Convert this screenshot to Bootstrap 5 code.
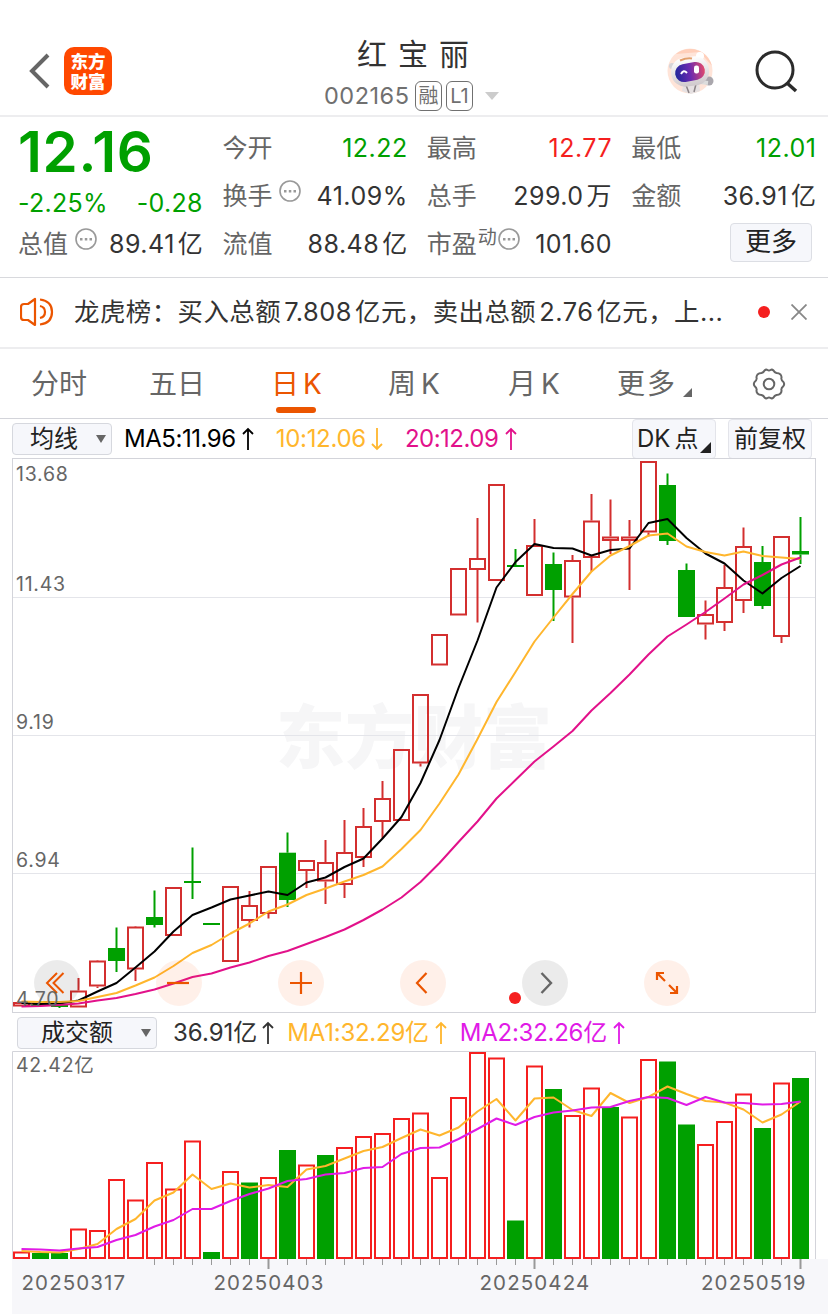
<!DOCTYPE html>
<html lang="zh-CN">
<head>
<meta charset="utf-8">
<meta name="viewport" content="width=device-width, initial-scale=1">
<title>红宝丽 002165</title>
<link href="https://cdn.jsdelivr.net/npm/bootstrap@5.3.0/dist/css/bootstrap.min.css" rel="stylesheet">
<style>
  body { font-family: Inter, "Noto Sans CJK SC", sans-serif; color: #333; background: #fff; font-size: 25px; line-height: 1; overflow: hidden; }
  .phone { width: 828px; height: 1314px; }
  .phone > * { flex: none; }
  .txt-dim { color: #666; }
  .up { color: #f51f1f; }
  .down { color: #00a000; }
  .ma10 { color: #ffb62d; }
  .ma20 { color: #e2118a; }
  .vma2 { color: #e01be6; }
  svg { display: block; flex: none; }

  .topbar { height: 117px; border-bottom: 2px solid #ededef; padding: 0 29px 0 29px; }
  .topbar .side { width: 220px; padding-top: 26px; }
  .brand-logo { width: 48px; height: 48px; border-radius: 10px; background: #ff4800; color: #fff; font: 900 17.5px/20px "Noto Sans CJK SC", sans-serif; padding-top: 4px; margin-left: 14px; text-align: center; }
  .stock-name { font-size: 30px; letter-spacing: 11px; margin-right: -9px; line-height: 36px; padding-top: 36px; }
  .stock-code { font-size: 23.5px; height: 30px; margin-top: 9px; margin-right: 5px; color: #707070; }
  .stock-code .num { letter-spacing: .5px; }
  .tagbox { border: 1.5px solid #707070; border-radius: 6px; height: 30px; width: 27px; font-size: 20px; margin-left: 4px; }
  .tagbox.first { margin-left: 6px; }

  .quote { height: 161px; border-bottom: 1px solid #d8d9dd; padding: 7px 12px 0 18px; column-gap: 19.5px; }
  .quote > div { width: 185px; }
  .stat { height: 48px; white-space: nowrap; }
  .num { letter-spacing: .5px; margin-right: -.5px; }
  .num i { font-style: normal; margin-left: 3px; }
  .price { height: 56px; font-size: 56.5px; font-weight: 600; letter-spacing: .7px; }
  .chg { height: 34px; margin-top: 6px; letter-spacing: .3px; }
  .dots { margin: -10px 0 0 7px; }
  .more-btn { width: 82px; height: 39px; margin: -4px 4px 0 0; border: 1.5px solid #dcdee4; border-radius: 4px; background: #f6f7fb; color: #222; padding: 0; font-size: 26px; line-height: 1; }

  .notice { height: 71px; border-bottom: 2px solid #ededef; padding: 0 20px 2px; }
  .notice-text { font-size: 25.4px; letter-spacing: .5px; white-space: nowrap; margin-left: 20px; width: 665px; }
  .notice-text i { font-style: normal; margin: 0 3px; }
  .dot { width: 12px; height: 12px; border-radius: 50%; background: #f51f1f; }

  .tabs { height: 70px; border-bottom: 1px solid #d3d4da; font-size: 28px; color: #666; }
  .tabs > div { white-space: nowrap; height: 69px; }
  .tab-on { color: #eb5500; position: relative; }
  .tab-on::after { content: ""; position: absolute; left: 5px; bottom: 5px; width: 40px; height: 6px; border-radius: 3px; background: #eb5500; }

  .ma-row { height: 39px; padding: 0 16px 0 12px; font-size: 24px; white-space: nowrap; }
  .picker { background: #f6f7fb; border: 1.5px solid #d6d8de; border-radius: 4px; color: #222; height: 32px; }
  .flat { height: 40px; border-color: #e3e4ea; }
  .chart { margin: 0 12px; position: relative; }
  .axis-label { position: absolute; left: 4px; font-size: 19.5px; color: #666; letter-spacing: .75px; }
  .mark-text { position: absolute; left: 264px; top: 239px; font: 900 69px/72px "Noto Sans CJK SC", sans-serif; color: #f6f6f7; }
  .chart svg.plot { position: relative; }
  .tools { position: absolute; left: 22px; bottom: 7px; gap: 76px; }
  .tool { width: 46px; height: 46px; border-radius: 50%; background: rgba(255,84,0,.085); }
  .tool.grey { background: rgba(0,0,0,.08); }
  .vol-row { height: 38px; padding: 4px 17px 0; font-size: 24px; white-space: nowrap; }
  .vol-row span { letter-spacing: -.25px; }
  .date-axis { height: 55px; margin-left: 12px; background: #f7f7fa; font-size: 20.5px; color: #666; letter-spacing: 1.1px; position: relative; }
  .date-axis span { position: absolute; top: 14px; }
</style>
</head>
<body>
<div class="phone d-flex flex-column">
  <header class="topbar d-flex justify-content-between">
    <div class="side d-flex align-items-center">
      <svg width="21" height="36" viewBox="0 0 21 36" fill="none" stroke="#666" stroke-width="4"><path d="M19 2 3 18 19 34"/></svg>
      <div class="brand-logo">东方<br>财富</div>
    </div>
    <div class="d-flex flex-column align-items-center">
      <div class="stock-name">红宝丽</div>
      <div class="stock-code d-flex align-items-center">
        <span class="num">002165</span>
        <span class="tagbox first d-flex align-items-center justify-content-center">融</span>
        <span class="tagbox d-flex align-items-center justify-content-center">L1</span>
        <svg width="14" height="8" viewBox="0 0 14 8" style="margin-left:12px"><path d="M0 0h14L7 8z" fill="#ccc"/></svg>
      </div>
    </div>
    <div class="side d-flex align-items-center justify-content-end">
      <svg width="48" height="48" viewBox="0 0 48 48">
        <defs>
          <linearGradient id="visor" x1="0" y1="0" x2="1" y2="0"><stop offset="0" stop-color="#20279c"/><stop offset=".5" stop-color="#6b2ab0"/><stop offset="1" stop-color="#e34a6c"/></linearGradient>
          <linearGradient id="shell" x1="0" y1="0" x2="0" y2="1"><stop offset="0" stop-color="#fff"/><stop offset="1" stop-color="#cfc9cc"/></linearGradient>
        </defs>
        <circle cx="24" cy="24" r="22.500" fill="#ffe4d8"/>
        <path d="M10 7a22.500 22.500 0 0 1 36 12L34 5z" fill="#ffcfba"/>
        <path d="M18 34h15l1 10-9 3-9-3z" fill="#e6e1e2"/><path d="M20 38l3 8M30 37l-2 8" stroke="#8b8487" stroke-width="1.500"/>
        <circle cx="6" cy="19" r="3" fill="#d6d4d8"/><circle cx="43" cy="34" r="4.500" fill="#aaa7ad"/><path d="M34 35l8 1" stroke="#ddd" stroke-width="4"/>
        <circle cx="34" cy="9" r="4" fill="#fff"/>
        <rect x="5" y="10" width="38" height="29" rx="14" fill="url(#shell)" transform="rotate(-8 24 24)"/>
        <path d="M14 13.500q7-3 12-2" stroke="#e3a06e" stroke-width="2.200" fill="none"/>
        <rect x="9" y="16" width="30" height="18" rx="9" fill="url(#visor)" transform="rotate(-10 24 25)"/>
        <path d="M15 27q2.500-5 6-1" stroke="#fff" stroke-width="2" fill="none"/><rect x="28" y="18.500" width="5" height="8" rx="2.200" fill="#fff"/>
      </svg>
      <svg style="margin-left:38px;margin-right:1px" width="46" height="46" viewBox="0 0 46 46" fill="none" stroke="#2b2b2b" stroke-width="3"><circle cx="23" cy="22" r="18"/><path d="M35 35l9 8" stroke-width="3.500"/></svg>
    </div>
  </header>

  <section class="quote d-flex">
    <div>
      <div class="price down d-flex align-items-center"><span>12.16</span></div>
      <div class="chg down d-flex align-items-center justify-content-between"><span>-2.25%</span><span>-0.28</span></div>
      <div class="stat d-flex align-items-center"><span class="txt-dim">总值</span><svg class="dots" width="22" height="22" viewBox="0 0 22 22"><circle cx="11" cy="11" r="10" fill="none" stroke="#999" stroke-width="1.600"/><path d="M5 10h2.500v2.500H5zM9.800 10h2.500v2.500H9.800zM14.500 10H17v2.500h-2.500z" fill="#999"/></svg><span class="num ms-auto">89.41<i>亿</i></span></div>
    </div>
    <div>
      <div class="stat d-flex align-items-center justify-content-between"><span class="txt-dim">今开</span><span class="num down">12.22</span></div>
      <div class="stat d-flex align-items-center"><span class="txt-dim">换手</span><svg class="dots" width="22" height="22" viewBox="0 0 22 22"><circle cx="11" cy="11" r="10" fill="none" stroke="#999" stroke-width="1.600"/><path d="M5 10h2.500v2.500H5zM9.800 10h2.500v2.500H9.800zM14.500 10H17v2.500h-2.500z" fill="#999"/></svg><span class="num ms-auto">41.09%</span></div>
      <div class="stat d-flex align-items-center justify-content-between"><span class="txt-dim">流值</span><span class="num">88.48<i>亿</i></span></div>
    </div>
    <div>
      <div class="stat d-flex align-items-center justify-content-between"><span class="txt-dim">最高</span><span class="num up">12.77</span></div>
      <div class="stat d-flex align-items-center justify-content-between"><span class="txt-dim">总手</span><span class="num">299.0<i>万</i></span></div>
      <div class="stat d-flex align-items-center"><span class="txt-dim">市盈</span><span class="txt-dim" style="font-size:19px;margin:-14px 0 0 1px">动</span><svg class="dots" style="margin-left:1px" width="22" height="22" viewBox="0 0 22 22"><circle cx="11" cy="11" r="10" fill="none" stroke="#999" stroke-width="1.600"/><path d="M5 10h2.500v2.500H5zM9.800 10h2.500v2.500H9.800zM14.500 10H17v2.500h-2.500z" fill="#999"/></svg><span class="num ms-auto">101.60</span></div>
    </div>
    <div>
      <div class="stat d-flex align-items-center justify-content-between"><span class="txt-dim">最低</span><span class="num down">12.01</span></div>
      <div class="stat d-flex align-items-center justify-content-between"><span class="txt-dim">金额</span><span class="num">36.91<i>亿</i></span></div>
      <div class="stat d-flex align-items-center justify-content-end"><button class="btn more-btn">更多</button></div>
    </div>
  </section>

  <section class="notice d-flex align-items-center">
    <svg width="34" height="30" viewBox="0 0 34 30" fill="none" stroke="#eb5500" stroke-width="2.200"><path d="M15 2v26L8 23H4q-3 0-3-3V10q0-3 3-3h4z" stroke-linejoin="round"/><path d="M20 9q5 1 5 6t-5 6M20 2.500Q32 4 32 15T20 27.500"/></svg>
    <div class="notice-text">龙虎榜：买入总额<i>7.808</i>亿元，卖出总额<i>2.76</i>亿元，上...</div>
    <span class="dot" style="margin-left:19px"></span>
    <svg style="margin-left:21px" width="16" height="16" viewBox="0 0 16 16" stroke="#888" stroke-width="1.800"><path d="M.5.5l15 15M15.500.5l-15 15"/></svg>
  </section>

  <nav class="tabs d-flex align-items-center">
    <div class="d-flex align-items-center" style="margin-left:31px;width:118px">分时</div>
    <div class="d-flex align-items-center" style="width:122px">五日</div>
    <div class="d-flex align-items-center tab-on" style="width:117px">日<span style="margin-left:4px">K</span></div>
    <div class="d-flex align-items-center" style="width:120px">周<span style="margin-left:5px">K</span></div>
    <div class="d-flex align-items-center" style="width:109px">月<span style="margin-left:5px">K</span></div>
    <div class="d-flex align-items-center" style="width:135px"><span style="letter-spacing:2px">更多</span><svg style="margin:18px 0 0 6px" width="9" height="9"><path d="M9 0v9H0z" fill="#666"/></svg></div>
    <div class="d-flex align-items-center"><svg width="34" height="32" viewBox="0 0 34 32" fill="none" stroke="#666" stroke-width="2"><path d="M12.500 2.500Q14 1 15.500 2q1.500 1 3 0Q20 1 21.500 2.500q1 2 3 2.500 2.500 0 4 1.500 1.500 2 .8 4 .2 2 2 3.300Q33 16 31.300 18.200q-1.800 1.500-2 3.300.7 2-.8 4-1.500 1.500-4 1.500-2 .5-3 2.500-1.500 1.500-3 .5-1.500-1-3 0-1.500 1-3-.5-1-2-3-2.500-2.500 0-4-1.500-1.500-2-.8-4-.2-1.800-2-3.300Q1 16 2.700 13.800q1.800-1.300 2-3.300-.7-2 .8-4Q7 5 9.500 5q2-.5 3-2.500z"/><circle cx="17" cy="16" r="5.300"/></svg></div>
  </nav>

  <div class="ma-row d-flex align-items-center">
    <div class="picker d-flex align-items-center" style="width:100px;padding-left:17px">均线<svg style="margin-left:18px" width="10" height="8"><path d="M0 0h10L5 8z" fill="#666"/></svg></div>
    <span class="text-black" style="margin-left:12px;letter-spacing:-.45px">MA5:11.96</span><svg style="margin-left:6px" width="12" height="24" viewBox="0 0 12 24" fill="none" stroke="#000" stroke-width="1.800"><path d="M6 23V2M1 7l5-5 5 5"/></svg>
    <span class="ma10" style="margin-left:22px;letter-spacing:-.3px">10:12.06</span><svg style="margin-left:5px" width="12" height="24" viewBox="0 0 12 24" fill="none" stroke="#ffb62d" stroke-width="1.800"><path d="M6 1v21M1 17l5 5 5-5"/></svg>
    <span class="ma20" style="margin-left:22px;letter-spacing:-.5px">20:12.09</span><svg style="margin-left:7px" width="12" height="24" viewBox="0 0 12 24" fill="none" stroke="#e2118a" stroke-width="1.800"><path d="M6 23V2M1 7l5-5 5 5"/></svg>
    <div class="picker flat d-flex align-items-center ms-auto" style="width:84px;padding-left:4px">DK<span style="margin-left:4px">点</span><svg style="margin:18px 0 0 2px" width="11" height="11"><path d="M11 0v11H0z" fill="#222"/></svg></div>
    <div class="picker flat d-flex align-items-center justify-content-center" style="width:84px;margin-left:12px">前复权</div>
  </div>

  <div class="chart" style="height:555px">
    <div class="mark-text">东方财富</div>
    <svg class="plot" id="kline" width="804" height="555" viewBox="12 458 804 555"></svg>
    <span class="axis-label" style="top:7px">13.68</span>
    <span class="axis-label" style="top:117px">11.43</span>
    <span class="axis-label" style="top:255px">9.19</span>
    <span class="axis-label" style="top:393px">6.94</span>
    <div class="tools d-flex">
      <div class="tool grey d-flex align-items-center justify-content-center"><svg style="margin-right:5px" width="20" height="22" viewBox="0 0 20 22" fill="none" stroke="#eb5500" stroke-width="2"><path d="M12 1 2 11l10 10M18.500 1l-10 10 10 10"/></svg></div>
      <div class="tool d-flex align-items-center justify-content-center"><svg style="margin-right:3px" width="22" height="22" stroke="#eb5500" stroke-width="2.200"><path d="M0 11h22"/></svg></div>
      <div class="tool d-flex align-items-center justify-content-center"><svg width="22" height="22" stroke="#eb5500" stroke-width="2.200"><path d="M0 11h22M11 0v22"/></svg></div>
      <div class="tool d-flex align-items-center justify-content-center"><svg style="margin-right:3px" width="13" height="22" fill="none" stroke="#eb5500" stroke-width="2.200"><path d="M11.500 1 2 11l9.500 10"/></svg></div>
      <div class="tool grey d-flex align-items-center justify-content-center"><svg style="margin-left:2px" width="13" height="22" fill="none" stroke="#666" stroke-width="2.400"><path d="M1.500 1 11 11 1.500 21"/></svg></div>
      <div class="tool d-flex align-items-center justify-content-center"><svg width="24" height="24" fill="none" stroke="#eb5500" stroke-width="2.200"><path d="M2 9V2h7M2 2l8 8M22 15v7h-7M22 22l-8-8"/></svg></div>
    </div>
    <span class="dot position-absolute" style="left:497px;bottom:9px"></span>
    <span class="axis-label" style="top:532px">4.70</span>
  </div>

  <div class="vol-row d-flex align-items-start">
    <div class="picker d-flex align-items-center" style="width:140px;padding-left:23px">成交额<svg style="margin-left:28px" width="10" height="8"><path d="M0 0h10L5 8z" fill="#666"/></svg></div>
    <div class="d-flex align-items-center" style="height:32px">
      <span style="margin-left:16px;letter-spacing:0">36.91亿</span><svg style="margin-left:5px" width="12" height="24" viewBox="0 0 12 24" fill="none" stroke="#333" stroke-width="1.800"><path d="M6 23V2M1 7l5-5 5 5"/></svg>
      <span class="ma10" style="margin-left:13px">MA1:32.29亿</span><svg style="margin-left:6px" width="12" height="24" viewBox="0 0 12 24" fill="none" stroke="#ffb62d" stroke-width="1.800"><path d="M6 23V2M1 7l5-5 5 5"/></svg>
      <span class="vma2" style="margin-left:13px">MA2:32.26亿</span><svg style="margin-left:6px" width="12" height="24" viewBox="0 0 12 24" fill="none" stroke="#e01be6" stroke-width="1.800"><path d="M6 23V2M1 7l5-5 5 5"/></svg>
    </div>
  </div>

  <div class="chart" style="height:208px">
    <svg class="plot" id="volume" width="804" height="208" viewBox="12 1051 804 208"></svg>
    <span class="axis-label" style="top:5px">42.42亿</span>
  </div>
  <div class="date-axis">
    <svg id="ticks" width="816" height="12" viewBox="12 1259 816 12"></svg>
    <span style="left:9.500px">20250317</span>
    <span style="left:201.500px">20250403</span>
    <span style="left:467.500px">20250424</span>
    <span style="left:689px">20250519</span>
  </div>
</div>

<script src="https://cdn.jsdelivr.net/npm/bootstrap@5.3.0/dist/js/bootstrap.bundle.min.js"></script>
<script>
  // One trading day per entry: colour, body top, body bottom, wick top, wick bottom.
  const days = [
    ['r',1002,1006.5],['g',1004,1006],['g',1005,1007,1005,1008],['r',990.5,1007.5,978],['r',960.5,986.5,960,988],['g',948,961,927.5,972],
    ['r',926.5,969.5,926,981],['g',917,925,890.5,927.5],['r',887,936],['g',881,883,847.5,899],['g',923,925],['r',886,962],
    ['r',905,921,891,927.5],['r',866,914,866,918.5],['g',852.7,900,832.5,907],['r',860,871,860,888],['r',862,881.5,840,904],['r',852,885,820,898],
    ['r',826,858,808,867],['r',798,822,781,838],['r',749,821],['r',694,763.5,694,766.5],['r',634,665.5],['r',568,615.5],
    ['r',558,570,518,622.5],['r',484,581],['g',565,567,549,567],['r',545,596,519],['g',564,590,552.5,621],['r',560,597.5,555,643],
    ['r',520.5,558,494,571.5],['r',536.5,541,499.5,554],['r',536.5,541,520,590],['r',461,532.5,461,536.5],['g',485,541,473.5,545],['g',570,617,563.5,617],
    ['r',614,624.5,600.5,639.5],['r',587,623,565,631],['r',546,601,527.5,613],['g',562,606,546,609],['r',536,637,536,643],['g',551,554.5,517,564]
  ];
  const ma5 = [1003,1004,1003.5,1000.5,991.5,983,967.5,951.5,931.5,915,907.5,899.5,895.5,891.5,895,882.5,877.5,867,858.5,838.5,817,783,740,688,640.5,587.5,562,544,548,548.5,555.5,550,548.5,523,519,538,553.5,563.5,580.5,593.5,578,566];
  const ma10 = [1001.5,1002,1002,1001,997,993,985.5,977.5,966,953,945,933.5,923.5,911.5,904.5,895,888.5,881.5,875,866.5,849,830,803.5,774.5,739,702,672,641.5,617.5,594,571.5,555.5,546,535.5,533.5,546.5,552,555.5,551.5,556,557.5,559];
  const ma20 = [1006.5,1006,1005,1003.5,1000.5,998,994,989.5,983.5,977,973.5,967.5,962.5,956,951,944,937,929.5,920,909.5,897.5,882,863,842,821.5,798.5,780,761.5,746.5,731,710.5,693,674.5,654.5,636.5,624.5,612,598.5,584.5,575,564.5,557.5];
  const vol = [1251.5,1253,1253,1228.5,1230,1179,1199.5,1162,1188.5,1140.5,1252,1171,1182.5,1177,1150,1164.5,1155,1147,1136,1133,1118,1112.5,1177,1097,1052,1057.5,1220.5,1065.5,1089,1115,1087.5,1107,1116.5,1059,1061.5,1124.5,1144,1121,1093.5,1128,1082.5,1078];
  const volGreen = [1,2,10,12,14,16,26,28,31,34,35,39,41];
  const vma1 = [1251,1252,1252.5,1249,1244,1229,1219,1200.5,1192.5,1174.5,1189,1183.5,1187.5,1185,1187,1169.5,1166,1158.5,1151,1147,1138,1129.5,1135.5,1127.5,1111.5,1099,1120.5,1098.5,1097.5,1110,1116,1093,1103,1097,1086.5,1094,1101,1102.5,1109.5,1122.5,1114.5,1101.5];
  const vma2 = [1249,1249.5,1250.5,1248.5,1247,1240,1235,1226.5,1220,1209,1209,1201,1194,1188.5,1181,1179,1174.5,1173,1168,1167,1154,1148,1147.5,1139,1129,1118.5,1125,1117,1112.5,1110.5,1107.5,1107,1101,1097,1098,1105,1097,1102.5,1103,1104.5,1104,1101.5];
  const cx = i => 21.5 + 19 * i;
  const line = (pts, color) => `<polyline points="${pts.map((y, i) => cx(i) + ',' + y).join(' ')}" fill="none" stroke="${color}" stroke-width="2" stroke-linejoin="round"/>`;
  const box = (i, top, bottom, color) => `<rect x="${cx(i) - 7.5}" y="${top + 1}" width="15" height="${Math.max(bottom - top - 2, .5)}" fill="none" stroke="${color}" stroke-width="2"/>`;

  let k = [597.5, 735.5, 873.5].map(y => `<path d="M12 ${y}H816" stroke="#e4e5ea"/>`).join('');
  days.forEach(([c, t, b, wt = t, wb = b], i) => {
    const color = c === 'r' ? '#d32f2f' : '#00a000';
    if (wt < t) k += `<path d="M${cx(i)} ${wt}V${t}" stroke="${color}" stroke-width="2"/>`;
    if (wb > b) k += `<path d="M${cx(i)} ${b}V${wb}" stroke="${color}" stroke-width="2"/>`;
    k += c === 'r' ? box(i, t, b, color) : `<rect x="${cx(i) - 8.5}" y="${t}" width="17" height="${b - t}" fill="${color}"/>`;
  });
  k += line(ma5, '#000') + line(ma10, '#ffb62d') + line(ma20, '#e2118a');
  k += '<rect x="12.500" y="458.500" width="803" height="554" fill="none" stroke="#d3d4da"/>';
  document.getElementById('kline').innerHTML = k;

  let v = '<path d="M12.500 1259V1051.500H815.500V1259" fill="none" stroke="#d3d4da"/>';
  vol.forEach((t, i) => {
    v += volGreen.includes(i) ? `<rect x="${cx(i) - 8.5}" y="${t}" width="17" height="${1259 - t}" fill="#00a000"/>` : box(i, t, 1259, '#f51f1f');
  });
  document.getElementById('volume').innerHTML = v + line(vma1, '#ffb62d') + line(vma2, '#e01be6');

  let t = '';
  for (let i = 7; i < 42; i++) {
    const major = i % 14 === 13;
    t += `<path d="M${cx(i)} 1259v${major ? 10 : 6}" stroke="#999" stroke-width="${major ? 2 : 1}"/>`;
  }
  document.getElementById('ticks').innerHTML = t;
</script>
</body>
</html>
